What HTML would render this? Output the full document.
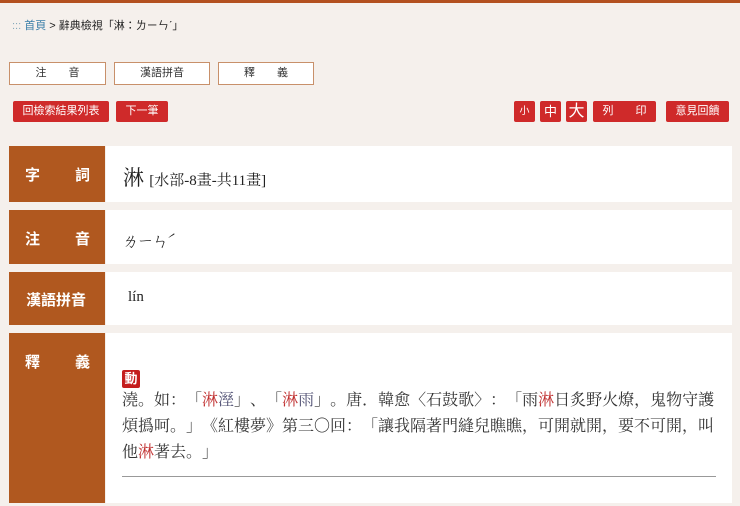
<!DOCTYPE html>
<html><head><meta charset="utf-8"><style>
*{margin:0;padding:0;box-sizing:border-box}
body{width:740px;height:506px;background:#f5f0ec;font-family:"Liberation Sans","Noto Sans CJK TC",sans-serif;position:relative;overflow:hidden;color:#222}
.a{position:absolute}
.topbar{left:0;top:0;width:740px;height:3px;background:#b3501f}
.crumb{left:12px;top:17px;font-size:11px;color:#222}
.crumb .c{color:#8ab}
.crumb .h{color:#3a7ea8}
.tab{top:62px;height:23px;background:#fff;border:1px solid #c8906a;font-size:11px;text-align:center;line-height:21px;color:#333}
.btn{background:#cf2a2a;color:#fff;font-size:11px;text-align:center;border-radius:2px;height:21px;line-height:21px;top:101px}
.lab{left:9px;width:96px;background:#b0581f;color:#fff;font-size:15px;font-weight:bold}
.cell{left:106px;width:626px;background:#fff}
.serif{font-family:"Liberation Serif","Noto Serif CJK SC",serif}
.cjk{font-family:"Noto Serif CJK SC",serif;font-feature-settings:"fwid" 1;text-spacing-trim:space-all}
.ln{white-space:nowrap;height:26px}
.r{color:#c03030}.b{color:#557}
</style></head><body>
<div class="a topbar"></div>
<div class="a crumb"><span class="c">:::</span> <span class="h">首頁</span> &gt; 辭典檢視「淋：ㄌㄧㄣˊ」</div>
<div class="a tab" style="left:9px;width:97px">注&emsp;&emsp;音</div>
<div class="a tab" style="left:114px;width:96px">漢語拼音</div>
<div class="a tab" style="left:218px;width:96px">釋&emsp;&emsp;義</div>
<div class="a btn" style="left:13px;width:96px">回檢索結果列表</div>
<div class="a btn" style="left:116px;width:52px">下一筆</div>
<div class="a btn" style="left:514px;width:21px;font-size:10px">小</div>
<div class="a btn" style="left:540px;width:21px;font-size:13px">中</div>
<div class="a btn" style="left:566px;width:21px;font-size:16px">大</div>
<div class="a btn" style="left:593px;width:63px">列&emsp;&emsp;印</div>
<div class="a btn" style="left:666px;width:63px">意見回饋</div>

<div class="a lab" style="top:146px;height:56px;padding:18px 15px 0 16px;display:flex;justify-content:space-between"><span>字</span><span>詞</span></div>
<div class="a cell" style="top:146px;height:56px"><div class="a serif" style="left:17px;top:16px;font-size:21px">淋 <span style="font-size:15px">[水部-8畫-共11畫]</span></div></div>

<div class="a lab" style="top:210px;height:54px;padding:18px 15px 0 16px;display:flex;justify-content:space-between"><span>注</span><span>音</span></div>
<div class="a cell" style="top:210px;height:54px"><div class="a cjk" style="left:16px;top:17px;font-size:17px;letter-spacing:-2px">ㄌㄧㄣˊ</div></div>

<div class="a lab" style="top:272px;height:53px;padding:17px 0 0 17px">漢語拼音</div>
<div class="a cell" style="top:272px;height:53px"><div class="a serif" style="left:22px;top:17px;font-size:15px">lín</div></div>

<div class="a lab" style="top:333px;height:170px;padding:18px 15px 0 16px;display:flex;justify-content:space-between;align-items:flex-start"><span>釋</span><span>義</span></div>
<div class="a cell" style="top:333px;height:170px">
<div class="a" style="left:16px;top:37px;width:18px;height:18px;background:#c41e1e;color:#fff;font-size:13px;font-weight:bold;text-align:center;line-height:18px;border-radius:2px">動</div>
<div class="a cjk" style="left:16px;top:53px;font-size:16px;line-height:26px;color:#333">
<div class="ln">澆。如：「<span class="r">淋</span><span class="b">溼</span>」、「<span class="r">淋</span><span class="b">雨</span>」。唐．韓愈〈石鼓歌〉：「雨<span class="r">淋</span>日炙野火燎，鬼物守護</div>
<div class="ln">煩撝呵。」《紅樓夢》第三〇回：「讓我隔著門縫兒瞧瞧，可開就開，要不可開，叫</div>
<div class="ln">他<span class="r">淋</span>著去。」</div>
</div>
<div class="a" style="left:16px;top:143px;width:594px;height:1px;background:#999"></div>
</div>
</body></html>
